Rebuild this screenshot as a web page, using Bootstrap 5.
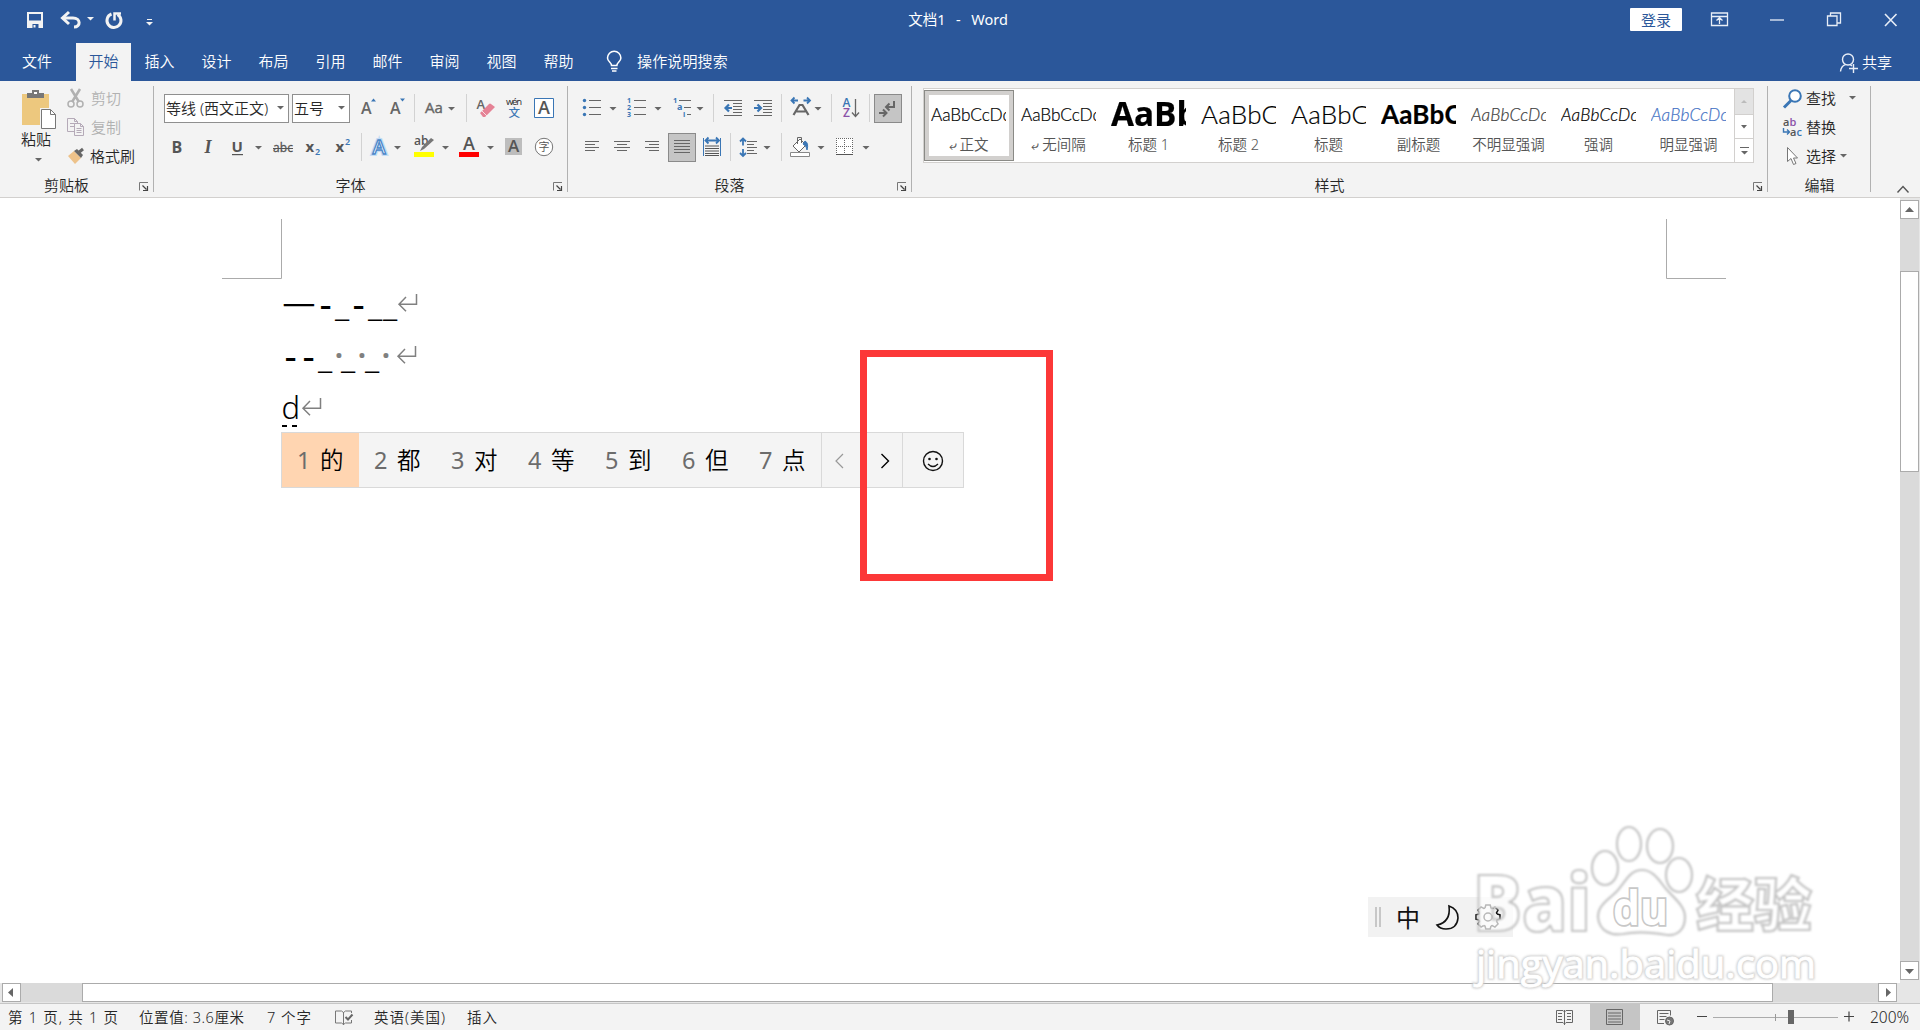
<!DOCTYPE html>
<html lang="zh-CN">
<head>
<meta charset="utf-8">
<title>文档1 - Word</title>
<link href="https://cdn.jsdelivr.net/npm/bootstrap@5.3.0/dist/css/bootstrap.min.css" rel="stylesheet">
<script src="https://cdn.jsdelivr.net/npm/bootstrap@5.3.0/dist/js/bootstrap.bundle.min.js"></script>
<style>
body{width:1920px;height:1030px;overflow:hidden;font:400 15px/20px "Noto Sans","Noto Sans CJK SC",sans-serif;color:#262626;background:#fff}
svg{display:block;flex:none;overflow:visible}
button{border:0;background:none;padding:0;color:inherit;font:inherit}
.blue{background:#2b579a;color:#fff}
.titlebar{height:43px}
.qat{padding-left:26px;width:860px}
.doctitle{width:200px;padding:9px 4px 0 0;font-size:14.5px;word-spacing:1.5px}
.login{width:52px;height:23px;background:#fff;color:#2b579a;line-height:22px;margin:8px 0 0 570px;border-radius:1px}
.tabs,.ribbon,.status{font-weight:350}
.tabs{height:38px}
.tabs .tab{width:57px;text-align:center;line-height:37px}
.tabs .tab.first{width:76px;padding-right:2px}
.tabs .tab.on{width:55px;background:#f3f3f3;color:#2b579a}
.tell{line-height:37px;letter-spacing:.15px}
.share{padding-right:28px;line-height:38px}
.ribbon{height:117px;background:#f3f3f3;border-bottom:1px solid #d2d0ce}
.grp{position:relative;height:116px}
.grp::after{content:"";position:absolute;right:0;top:5px;width:1px;height:106px;background:#b1b1b1}
.g-clip{width:154px}
.g-font{width:414px;padding:12px 0 0 10px}
.g-para{width:344px;padding:12px 0 0 9px}
.g-style{width:856px}
.g-edit{width:103px;padding:2px 0 0 15px}
.grp-name{position:absolute;left:0;right:21px;top:94px;text-align:center}
.g-edit .grp-name{right:0}
.launch{position:absolute;right:5px;top:101px}
.toolrow{height:30px;margin-bottom:9px}
.vsep{width:7px;height:28px;background:linear-gradient(#d2d2d2,#d2d2d2) 3px 0/1px 28px no-repeat;flex:none}
.combo{height:29px;border:1px solid #8f8f8f;background:#fff;padding:0 4px 0 1px;white-space:nowrap}
.c-name{width:125px}
.c-size{width:58px;margin:0 4px 0 3px}
.pressed{background:#c5c5c5;box-shadow:inset 0 0 0 1px #8a8a8a;width:28px;height:29px}
.marks{margin-left:1px}
.bigpaste{width:58px;padding-left:4px}
.bigpaste div{padding-left:17px;line-height:21px}
.cliplist{padding:2px 0 0 9px}
.cliprow{height:29px}
.dim{color:#b1b1b1}
.gallery{margin:7px 0 0 11px;width:831px;height:75px;border:1px solid #d2d0ce;background:#fff}
.sty{width:90px;height:73px;padding:8px 8px 0 7px}
.sty.sel{height:71px;margin-top:1px;border:1px solid #8a8a86;box-shadow:inset 0 0 0 4px #d2d0ce;padding:6px 7px 0 6px}
.pv{width:75px;height:36px;overflow:hidden;white-space:nowrap;color:#000;font:300 17.3px/36px Lato,sans-serif;-webkit-text-stroke:.2px currentColor;letter-spacing:-.1px}
.sn{color:#555;text-align:center;font-size:14.5px;line-height:20px;margin-top:1px;white-space:nowrap}
.h1p{font:700 34px/33px "Open Sans",sans-serif;letter-spacing:0}
.h1p span{display:inline-block;transform:scaleX(.98);transform-origin:0 50%}
.h2p{font-size:26px;line-height:34px;letter-spacing:.2px}
.it{font-size:17.3px;letter-spacing:.2px}
.soft-em{color:#404040}
.strong-em{color:#4472c4}
.gscroll{width:20px;border-left:1px solid #d2d0ce}
.gscroll div{height:24px;border-bottom:1px solid #d2d0ce}
.gscroll .off{background:#e3e3e3;height:26px}
.page{height:785px;width:1900px;position:relative;background:#fff}
.float{position:absolute}
.canvas{left:0;top:0}
.vbar{width:20px;height:785px;background:#e6e6e6;padding:2px 1px 0 0}
.sbtn{background:#fff;border:1px solid #ababab;flex:none;height:19px}
.hbar .sbtn{width:19px}
.track{background:#dadada}
.hbar{height:20px;background:#e6e6e6;padding-left:2px}
.hbar .track{height:19px}
.hbar .thumb{width:1691px}
.status{height:27px;background:#f3f3f3;border-top:1px solid #c6c6c6;font-size:14.5px;line-height:26px;white-space:nowrap}
.picked{background:#c5c5c5}
.ime{left:281px;top:234px;width:683px;height:56px;background:#f4f4f4;border:1px solid #d9d9d9;font-size:23.5px}
.cand{width:77px;padding-left:15px;color:#6c6c6c;line-height:54px}
.cand b{font:350 23.5px/53px "Noto Sans CJK SC",sans-serif;color:#000;margin-left:9px}
.cand i{display:inline-block;width:14px;font-style:normal;font-weight:400}
.cand.pick{background:#ffd5b1}
.focusbox{left:860px;top:152px;width:193px;height:231px;border:7px solid #fc3838}
.langbar{left:1368px;top:699px;width:145px;height:40px;background:#f2f2f2}
.zoomval{font-size:15.5px;width:50px}
.wmark{left:1460px;top:815px}
</style>
</head>
<body>
<svg width="0" height="0" class="position-absolute">
<defs>
<path id="dn" d="M0 0h7l-3.5 3.6z" fill="#666"/>
<g id="la"><path d="M.5 8.500V.5H9" fill="none" stroke="#777"/><path d="M3.500 3.500l4 4M8.500 4v4.500H4" fill="none" stroke="#444" stroke-width="1.200"/></g>
<g id="ret" fill="none" stroke="#808080" stroke-width="1.500"><path d="M18.500 0v10.200H1M8 3L1 10.200l7 7"/></g>
<path id="tooth" d="M-3-9l.8-3h4.400l.8 3L4.240-8.500"/>
</defs>
</svg>

<header class="blue titlebar d-flex">
  <div class="qat d-flex">
    <svg width="130" height="43" fill="none" stroke="#f3f3f3">
      <path d="M2 13h14v14H2z" stroke-width="2"/><path d="M2 21h14v6H2z" fill="#f3f3f3"/><path d="M6.500 28v-4h6v4" fill="#2b579a" stroke="none"/><path d="M7.500 25h2v2.500h-2z" fill="#f3f3f3" stroke="none"/>
      <path d="M38 18h9c8 0 8 9 1 9" stroke-width="3"/><path d="M43 12l-6.500 6 6.500 6" stroke-width="3"/>
      <path d="M61 17h7l-3.500 3.500z" fill="#f3f3f3" stroke="none"/>
      <path d="M85.500 14a7 7 0 1 0 6 .5" stroke-width="3"/><path d="M88.500 20.500v-7H95" stroke-width="2.500"/>
      <path d="M121 19.500h5"/><path d="M120 22h7l-3.500 3.500z" fill="#f3f3f3" stroke="none"/>
    </svg>
  </div>
  <div class="doctitle text-center">文档1&nbsp; - &nbsp;Word</div>
  <div class="d-flex flex-grow-1">
    <button class="login">登录</button>
    <svg width="238" height="43" fill="none" stroke="#e8eef7" stroke-width="1.300">
      <path d="M29.500 13h16v12.500h-16zM29.500 16.500h16M37.500 24v-6M34.500 20.500l3-2.800 3 2.800"/>
      <path d="M88 20h14"/><path d="M145.500 16h9.500v9.500h-9.500zM148.500 16v-3h10v10H155"/><path d="M203 14l11.500 12M214.500 14L203 26" stroke-width="1.600"/>
    </svg>
  </div>
</header>

<nav class="blue tabs d-flex">
  <div class="tab first">文件</div><div class="tab on">开始</div><div class="tab">插入</div><div class="tab">设计</div><div class="tab">布局</div><div class="tab">引用</div><div class="tab">邮件</div><div class="tab">审阅</div><div class="tab">视图</div><div class="tab">帮助</div>
  <svg width="50" height="38" fill="none" stroke="#fff" stroke-width="1.500"><path d="M24.500 22.500c0-3-4-4-4-7.500a6.700 6.700 0 0 1 13.400 0c0 3.500-4 4.500-4 7.500zM24 25.500h6.500M25 28h4.500"/></svg>
  <span class="tell">操作说明搜索</span>
  <div class="ms-auto d-flex share">
    <svg width="22" height="38" fill="none" stroke="#e8eef7" stroke-width="1.400"><circle cx="8" cy="16.500" r="5.500"/><path d="M.5 28.500c.5-4 2.500-6 5-6.800M10 21.500l2 1.500M9 25.500h9M13.500 21v9"/></svg>
    <span>共享</span>
  </div>
</nav>

<section class="ribbon d-flex">
  <div class="grp g-clip d-flex">
    <div class="bigpaste">
      <svg width="54" height="48"><path d="M18 13h27v31H18z" fill="#edc87e"/><path d="M23 17v-5h5V9h7v3h5v5z" fill="#777"/><path d="M30 11h3v2h-3z" fill="#fff"/><path d="M36 27h12l5 5v16H36z" fill="#f3f3f3"/><path d="M37.500 28.500h9l5 5v14h-14z" fill="#fff" stroke="#777"/><path d="M46.500 28.500v5h5" fill="none" stroke="#777"/></svg>
      <div>粘贴</div>
      <svg width="54" height="12"><use href="#dn" x="31" y="8"/></svg>
    </div>
    <div class="cliplist">
      <div class="cliprow d-flex align-items-center dim"><svg width="24" height="20" fill="none" stroke="#b1b1b1" stroke-width="1.500"><path d="M4 1l8 13M13 1L5 14" stroke-width="2.500"/><circle cx="4" cy="16" r="3"/><circle cx="13" cy="16" r="3"/></svg>剪切</div>
      <div class="cliprow d-flex align-items-center dim"><svg width="24" height="20" fill="#f3f3f3" stroke="#b5aab8"><path d="M.5 1.500h7l3 3v10H.5zM7.500 1.500v3h3M3 6.500h5M3 9.500h5"/><path d="M7.500 6.500h6l3 3v9h-9zM13.500 6.500v3h3M9.500 11.500h5M9.500 13.500h5M9.500 15.500h5"/></svg>复制</div>
      <div class="cliprow d-flex align-items-center"><svg width="23" height="20"><path d="M1 10l6-5 7 7-6 6z" fill="#edc28a"/><path d="M7 5l3-2 6 6-2 3z" fill="#666"/><path d="M11 7l5-4" stroke="#666" stroke-width="3"/></svg>格式刷</div>
    </div>
    <div class="grp-name">剪贴板</div><svg class="launch" width="10" height="10"><use href="#la"/></svg>
  </div>

  <div class="grp g-font">
    <div class="toolrow d-flex align-items-center">
      <div class="combo c-name d-flex align-items-center justify-content-between"><span>等线 (西文正文)</span><svg width="7" height="4"><use href="#dn"/></svg></div>
      <div class="combo c-size d-flex align-items-center justify-content-between"><span>五号</span><svg width="7" height="4"><use href="#dn"/></svg></div>
      <svg width="28" height="30" font-family="Open Sans" font-weight="600" font-size="16" fill="#666"><text x="7" y="21">A</text><path d="M17 8.500l2.500-3 2.500 3z" fill="#3a76b5"/></svg>
      <svg width="29" height="30" font-family="Open Sans" font-weight="600" font-size="16" fill="#666"><text x="8" y="21">A</text><path d="M18 5.500h5l-2.500 3z" fill="#3a76b5"/></svg>
      <div class="vsep"></div>
      <svg width="45" height="30"><text x="7" y="20" font-family="Open Sans" font-size="15" font-weight="400" fill="#666" stroke="#666" stroke-width=".4">Aa</text><use href="#dn" x="30" y="14"/></svg>
      <div class="vsep"></div>
      <svg width="31" height="30"><text x="6.500" y="16" font-family="Open Sans" font-weight="600" font-size="13" fill="#666">A</text><path d="M10 20l9-9q1-1 2 0l4 3-10 10h-2z" fill="#e58295"/><path d="M12 18l5 5" stroke="#f8dfe3"/></svg>
      <svg width="28" height="30" font-weight="400"><text x="5" y="12" font-size="9.500" fill="#333" textLength="16">wén</text><text x="7.500" y="24" font-size="11.500" font-weight="500" font-family="Noto Sans CJK SC" fill="#3a76b5">文</text></svg>
      <svg width="32" height="30"><path d="M5.500 5.500h19v19h-19z" fill="#fff" stroke="#3a76b5"/><text x="15" y="21" text-anchor="middle" font-family="Open Sans" font-weight="600" font-size="18" fill="#555">A</text></svg>
    </div>
    <div class="toolrow d-flex align-items-center">
      <svg width="25" height="30" fill="#555"><text x="7.500" y="21" font-family="Open Sans" font-weight="700" font-size="16">B</text></svg>
      <svg width="38" height="30" fill="#555"><text x="15.500" y="21" font-family="Liberation Serif" font-style="italic" font-weight="700" font-size="18">I</text></svg>
      <svg width="41" height="30" fill="#555"><text x="4.500" y="20" font-family="Open Sans" font-weight="700" font-size="15">U</text><path d="M5 22h11v1.200H5z"/><use href="#dn" x="28" y="14"/></svg>
      <svg width="30" height="30" fill="#555"><text x="5" y="20" font-family="Open Sans" font-weight="400" font-size="12" textLength="20" stroke="#555" stroke-width=".3">abc</text><path d="M5 16h20v1H5z"/></svg>
      <svg width="30" height="30" fill="#555"><text x="7.500" y="20" font-family="Open Sans" font-weight="700" font-size="15">x</text><text x="17" y="23" font-size="9" font-weight="600" fill="#3a76b5">2</text></svg>
      <svg width="30" height="30" fill="#555"><text x="7.500" y="20" font-family="Open Sans" font-weight="700" font-size="15">x</text><text x="17" y="13" font-size="9" font-weight="600" fill="#3a76b5">2</text></svg>
      <div class="vsep"></div>
      <svg width="43" height="30" font-family="Open Sans" font-size="20"><text x="7.500" y="22" fill="#fff" font-weight="600" stroke="#c4dcf4" stroke-width="4" paint-order="stroke">A</text><text x="7.500" y="22" font-weight="600" fill="#fff" stroke="#4a86c8" stroke-width="1.300">A</text><use href="#dn" x="29" y="14"/></svg>
      <svg width="45" height="30"><text x="6" y="13" font-family="Open Sans" font-weight="600" font-size="12" fill="#555">ab</text><path d="M12 19l2-4 9-9 3 2-10 9z" fill="#777"/><path d="M6 20h20v5H6z" fill="#ff0"/><use href="#dn" x="34" y="14"/></svg>
      <svg width="45" height="30"><text x="16" y="18" text-anchor="middle" font-family="Open Sans" font-weight="600" font-size="18" fill="#555">A</text><path d="M6 20h20v5H6z" fill="red"/><use href="#dn" x="34" y="14"/></svg>
      <svg width="31" height="30"><path d="M7 6h17v17H7z" fill="#bdbdbd"/><text x="15.500" y="20" text-anchor="middle" font-family="Open Sans" font-weight="600" font-size="17" fill="#555">A</text></svg>
      <svg width="31" height="30"><circle cx="15" cy="15" r="8.700" fill="#fff" stroke="#777"/><text x="15" y="19" text-anchor="middle" font-size="11" fill="#555" font-family="Noto Sans CJK SC">字</text></svg>
    </div>
    <div class="grp-name">字体</div><svg class="launch" width="10" height="10"><use href="#la"/></svg>
  </div>

  <div class="grp g-para">
    <div class="toolrow d-flex align-items-center">
      <svg width="45" height="30" stroke="#666"><path d="M12 7.500h12M12 14.500h12M12 21.500h12"/><g fill="#3a76b5" stroke="none"><circle cx="7.500" cy="7.500" r="1.700"/><circle cx="7.500" cy="14.500" r="1.700"/><circle cx="7.500" cy="21.500" r="1.700"/></g><use href="#dn" x="32.500" y="14" stroke="none"/></svg>
      <svg width="45" height="30"><path d="M12 7.500h12M12 14.500h12M12 21.500h12" stroke="#666"/><g fill="#3a76b5" font-size="7" font-weight="700"><text x="5" y="10">1</text><text x="5" y="17">2</text><text x="5" y="24">3</text></g><use href="#dn" x="32.500" y="14"/></svg>
      <svg width="43" height="30"><path d="M12 7.500h12M17 14.500h7M20 21.500h4" stroke="#666"/><g fill="#3a76b5" font-size="7.500" font-weight="700"><text x="6" y="10">1</text><text x="10" y="17" font-size="9">a</text><text x="16" y="24">i</text></g><use href="#dn" x="29.500" y="14"/></svg>
      <div class="vsep"></div>
      <svg width="31" height="30"><path d="M7 7.500h18M16 10.500h9M16 13.500h9M16 16.500h9M16 19.500h9M7 22.500h18" stroke="#666"/><path d="M15 15H8M12 11.500L8.500 15l3.500 3.500" stroke="#3a76b5" stroke-width="2.200" fill="none"/></svg>
      <svg width="30" height="30"><path d="M6 7.500h18M15 10.500h9M15 13.500h9M15 16.500h9M15 19.500h9M6 22.500h18" stroke="#666"/><path d="M6 15h7M9.500 11.500L13 15l-3.500 3.500" stroke="#3a76b5" stroke-width="2.200" fill="none"/></svg>
      <div class="vsep"></div>
      <svg width="43" height="30"><path d="M8.500 22l6-10h3l6 10M11.500 18.500h9" stroke="#666" stroke-width="2.200" fill="none"/><path d="M6.500 7.500H13M9.500 4.500l-3 3 3 3M25 7.500h-6.500M22 4.500l3 3-3 3" stroke="#3a76b5" stroke-width="1.800" fill="none"/><use href="#dn" x="29.500" y="14"/></svg>
      <div class="vsep"></div>
      <svg width="31" height="30" font-family="Open Sans" font-weight="600" font-size="12"><text x="7.500" y="14" fill="#3a76b5">A</text><text x="8" y="24" fill="#8a52a8">Z</text><path d="M20.500 6v17M17 19.500l3.500 4 3.500-4" fill="none" stroke="#666" stroke-width="1.300"/></svg>
      <div class="vsep"></div>
      <button class="pressed marks"><svg width="28" height="29" fill="none" stroke="#666" stroke-width="2"><path d="M20 7v6h-7M15.500 9.500L12 13l3.500 3.500M5 19h7M9 15.500l3.500 3.500L9 22.500"/></svg></button>
    </div>
    <div class="toolrow d-flex align-items-center">
      <svg width="30" height="30" stroke="#666"><path d="M8 9.500h14M8 12.500h10M8 15.500h14M8 18.500h10"/></svg>
      <svg width="30" height="30" stroke="#666"><path d="M7 9.500h16M10 12.500h10M7 15.500h16M10 18.500h10"/></svg>
      <svg width="31" height="30" stroke="#666"><path d="M8 9.500h14M12 12.500h10M8 15.500h14M12 18.500h10"/></svg>
      <button class="pressed"><svg width="28" height="29" stroke="#666"><path d="M6 7.500h16M6 10.500h16M6 13.500h16M6 16.500h16M6 19.500h16"/></svg></button>
      <svg width="31" height="30"><path d="M7.500 6v18M24.500 6v18" stroke="#3a76b5"/><path d="M10 8.500h13M12.500 5.500l-3 3 3 3M20 5.500l3 3-3 3" stroke="#3a76b5" stroke-width="1.800" fill="none"/><path d="M9 14h14M9 16.500h14M9 19h14M9 21.500h14M9 23.500h14" stroke="#555"/></svg>
      <div class="vsep"></div>
      <svg width="44" height="30"><path d="M13 9.500h10M13 12.500h7M13 15.500h10M13 18.500h7M13 21.500h10" stroke="#666"/><path d="M9 6.500v7M9 17v7M6 9.500l3-3 3 3M6 21l3 3 3-3" fill="none" stroke="#3a76b5" stroke-width="1.800"/><use href="#dn" x="29.500" y="14"/></svg>
      <div class="vsep"></div>
      <svg width="45" height="30"><path d="M8 14l7-7 6 6-7 7z" fill="#fff" stroke="#666"/><path d="M12.500 12V5.500h4V11" fill="none" stroke="#666"/><path d="M20 9q4 2 2 9 0-4-4-6z" fill="#3a76b5" stroke="#3a76b5"/><path d="M5.500 20.500h19v4h-19z" fill="#fff" stroke="#888"/><use href="#dn" x="32.500" y="14"/></svg>
      <svg width="45" height="30"><path d="M6 6h17v17H6z" fill="#fff"/><path d="M6.500 6v17M14.500 6v17M22.500 6v17M6 6.500h17M6 14.500h17" stroke="#666" stroke-dasharray="1 1"/><path d="M6 22.500h17" stroke="#555"/><use href="#dn" x="32.500" y="14"/></svg>
    </div>
    <div class="grp-name">段落</div><svg class="launch" width="10" height="10"><use href="#la"/></svg>
  </div>

  <div class="grp g-style">
    <div class="gallery d-flex">
      <div class="sty sel"><div class="pv">AaBbCcDc</div><div class="sn"><small>⤶</small> 正文</div></div>
      <div class="sty"><div class="pv">AaBbCcDc</div><div class="sn"><small>⤶</small> 无间隔</div></div>
      <div class="sty"><div class="pv h1p"><span>AaBb</span></div><div class="sn">标题 1</div></div>
      <div class="sty"><div class="pv h2p">AaBbC</div><div class="sn">标题 2</div></div>
      <div class="sty"><div class="pv h2p">AaBbC</div><div class="sn">标题</div></div>
      <div class="sty"><div class="pv h2p fw-bold">AaBbC</div><div class="sn">副标题</div></div>
      <div class="sty"><div class="pv it fst-italic soft-em">AaBbCcDc</div><div class="sn">不明显强调</div></div>
      <div class="sty"><div class="pv it fst-italic">AaBbCcDc</div><div class="sn">强调</div></div>
      <div class="sty"><div class="pv it fst-italic strong-em">AaBbCcDc</div><div class="sn">明显强调</div></div>
      <div class="gscroll ms-auto">
        <div class="off"><svg width="18" height="24"><path d="M6 14h6l-3-3z" fill="#bbb"/></svg></div>
        <div><svg width="18" height="23"><path d="M6 10h6l-3 3.500z" fill="#666"/></svg></div>
        <div class="border-0"><svg width="18" height="23"><path d="M5 8h9v1H5zM6 12h7l-3.500 3.500z" fill="#666"/></svg></div>
      </div>
    </div>
    <div class="grp-name">样式</div><svg class="launch" width="10" height="10"><use href="#la"/></svg>
  </div>

  <div class="grp g-edit">
    <div class="cliprow d-flex align-items-center"><svg width="23" height="20"><circle cx="12" cy="8" r="5.800" fill="#fff" stroke="#3a76b5" stroke-width="2"/><path d="M8 12.500l-7 7" stroke="#3a76b5" stroke-width="3"/></svg>查找<svg width="20" height="4"><use href="#dn" x="13"/></svg></div>
    <div class="cliprow d-flex align-items-center"><svg width="23" height="20" font-family="Open Sans" font-size="11" font-weight="600" fill="#555"><text x="0" y="9">a<tspan fill="#8a52a8">b</tspan></text><text x="7" y="19">a<tspan fill="#3a76b5">c</tspan></text><path d="M.5 11v4H6M4 12.500L6.500 15 4 17.500" fill="none" stroke="#3a76b5" stroke-width="1.400"/></svg>替换</div>
    <div class="cliprow d-flex align-items-center"><svg width="23" height="20"><path d="M4.500 1.500v14l3.500-3 2.500 6 2.500-1-2.500-5.500h4z" fill="#fff" stroke="#777"/></svg>选择<svg width="12" height="4"><use href="#dn" x="4"/></svg></div>
    <div class="grp-name">编辑</div>
  </div>
  <div class="ms-auto d-flex align-items-end"><svg width="24" height="13"><path d="M1.500 8.500l5.500-6 5.500 6" fill="none" stroke="#555" stroke-width="1.400"/></svg></div>
</section>

<main class="d-flex">
  <div class="page">
    <svg class="float canvas" width="1900" height="300">
      <path d="M222 80.500h59.500V21M1726 80.500h-59.500V21" fill="none" stroke="#ababab"/>
      <g font-family="Noto Sans" fill="#000">
        <text y="118" x="282" font-family="Noto Sans CJK SC" font-size="38" font-weight="350">—</text>
        <text y="120" x="319.500 352.500" font-size="38">--</text>
        <text y="117.500" x="335 368 383" font-size="34" font-weight="300">___</text>
        <text y="172" x="284.500 302.500" font-size="38">--</text>
        <text y="169.500" x="318 341 365" font-size="34" font-weight="300">___</text>
        <text y="169" x="334.500 357.500 381.500" fill="#808080" font-size="32" font-weight="600">···</text>
        <text x="281.500" y="221" font-size="31" font-weight="350">d</text>
      </g>
      <use href="#ret" x="398" y="96"/><use href="#ret" x="397" y="148"/><use href="#ret" x="302" y="200"/>
      <path d="M282 228h5M292 228h5" stroke="#000" stroke-width="2"/>
    </svg>
    <div class="ime float d-flex">
      <div class="cand pick"><i>1</i><b>的</b></div><div class="cand"><i>2</i><b>都</b></div><div class="cand"><i>3</i><b>对</b></div><div class="cand"><i>4</i><b>等</b></div><div class="cand"><i>5</i><b>到</b></div><div class="cand"><i>6</i><b>但</b></div><div class="cand"><i>7</i><b>点</b></div>
      <svg width="142" height="54" fill="none"><path d="M.5 0v54M81.500 0v54" stroke="#d9d9d9"/><path d="M22 21l-7 7 7 7" stroke="#999" stroke-width="1.200"/><path d="M60.500 21l7 7-7 7" stroke="#000" stroke-width="1.400"/><circle cx="112" cy="28" r="9.500" stroke="#111" stroke-width="1.400"/><path d="M107 31q5 5 10 0" stroke="#111" stroke-width="1.300"/><circle cx="108.500" cy="26" r="1.300" fill="#111"/><circle cx="115.500" cy="26" r="1.300" fill="#111"/></svg>
    </div>
    <div class="focusbox float"></div>
    <div class="langbar float">
      <svg width="145" height="40" fill="none" stroke="#111" stroke-width="1.600"><path d="M8 10v20M12 10v20" stroke="#b0b0b0" stroke-width="1.300"/><text x="28" y="29.500" font-size="24" fill="#111" stroke="none" font-family="Noto Sans CJK SC">中</text><path d="M81 9q9 3 9 12-1 11-12 11-6 0-9-4 14-3 12-19z"/>
      <g transform="translate(120 20)" stroke-width="1.500"><use href="#tooth"/><use href="#tooth" transform="rotate(45)"/><use href="#tooth" transform="rotate(90)"/><use href="#tooth" transform="rotate(135)"/><use href="#tooth" transform="rotate(180)"/><use href="#tooth" transform="rotate(225)"/><use href="#tooth" transform="rotate(270)"/><use href="#tooth" transform="rotate(315)"/><circle r="4"/></g></svg>
    </div>
  </div>
  <div class="vbar">
    <div class="sbtn"><svg width="17" height="17"><path d="M4 11h9l-4.500-5z" fill="#666"/></svg></div>
    <div class="track" style="height:52px"></div><div class="sbtn" style="height:201px"></div><div class="track" style="height:489px"></div>
    <div class="sbtn"><svg width="17" height="17"><path d="M4 7h9l-4.500 5z" fill="#666"/></svg></div>
  </div>
</main>

<div class="hbar d-flex">
  <div class="sbtn"><svg width="17" height="17"><path d="M10 4v9L5 8.500z" fill="#666"/></svg></div>
  <div class="track" style="width:61px"></div><div class="sbtn thumb"></div><div class="track" style="width:105px"></div>
  <div class="sbtn"><svg width="17" height="17"><path d="M7 4v9l5-4.500z" fill="#666"/></svg></div>
</div>

<footer class="status d-flex">
  <svg width="560" height="26" fill="#262626" font-size="14.500"><text x="8" y="18.500" textLength="110">第 1 页, 共 1 页</text><text x="139" y="18.500" textLength="105">位置值: 3.6厘米</text><text x="267" y="18.500" textLength="44">7 个字</text><path d="M343.500 8v13M343.500 8.500l-2-1.500h-6v12h6l2 1.500M343.500 8.500l2-1.500h6v2M343.500 20.500l2-1.500h6v-3" fill="none" stroke="#777"/><path d="M345.500 13l2.500 2.500 4.500-5" fill="none" stroke="#666" stroke-width="2"/><text x="374" y="18.500" textLength="71">英语(美国)</text><text x="467" y="18.500" textLength="30">插入</text></svg>
  <div class="ms-auto d-flex">
    <svg width="48" height="26" fill="none" stroke="#666"><path d="M22.500 6v15M14.500 6.500h6.500l1.500 1.500 1.500-1.500h6.500v12H24l-1.500 1.500-1.500-1.500h-6.500zM16 9.500h4M16 12.500h4M16 15.500h4M25 9.500h4M25 12.500h4M25 15.500h4"/></svg>
    <svg class="picked" width="50" height="27" fill="none" stroke="#666"><path d="M16.500 5.500h16v15h-16zM18 9h13M18 12h13M18 15h13M18 18h13"/></svg>
    <svg width="230" height="26" fill="none" stroke="#666"><path d="M24 19.500h-6.500V6.500h13v5M19.500 9.500h9M19.500 12.500h7M19.500 15.500h5"/><circle cx="29.500" cy="17" r="4" fill="#777"/><path d="M27 16l3 1-1 3" stroke="#eee"/><path d="M57 12.500h10M204 12.500h10M209 7.500v10" stroke="#444" stroke-width="1.200"/><path d="M73 13.500h125" stroke="#ababab"/><path d="M135.500 10v7" stroke="#999"/><path d="M148 6h6v14h-6z" fill="#666" stroke="none"/></svg>
    <span class="zoomval">200%</span>
  </div>
</footer>

<svg class="float wmark" width="370" height="190" font-family="Open Sans" font-weight="700">
  <defs><filter id="soft" x="-5%" y="-5%" width="110%" height="110%"><feGaussianBlur stdDeviation=".8"/></filter>
  <g id="logo">
    <text x="13" y="116" font-size="78" textLength="118" lengthAdjust="spacingAndGlyphs" font-weight="800">Bai</text>
    <ellipse cx="145" cy="53" rx="13" ry="17"/><ellipse cx="169" cy="29" rx="12" ry="17"/><ellipse cx="200" cy="31" rx="13" ry="17"/><ellipse cx="219" cy="60" rx="13" ry="17"/>
    <path d="M182 55c12 0 18 12 25 20s18 16 18 27c0 13-8 19-18 18-16-3-30-4-44-1-12 2-24-3-25-17 0-13 12-18 20-27s12-20 24-20z"/>
    <text x="236" y="111" font-size="58" font-family="Noto Sans CJK SC" font-weight="900">经验</text>
  </g>
  <text id="url" x="16" y="163" font-size="38" font-weight="400" textLength="340" lengthAdjust="spacingAndGlyphs">jingyan.baidu.com</text>
  </defs>
  <use href="#logo" fill="#fff" opacity=".7"/>
  <use href="#logo" fill="none" stroke="#c4c4c4" stroke-width="2.200" filter="url(#soft)"/>
  <use href="#url" fill="#ccc" stroke="#ccc" stroke-width="3" filter="url(#soft)"/>
  <use href="#url" fill="#fff" stroke="#fff" stroke-width=".8"/>
  <text x="153" y="110" font-size="46" fill="#fff" stroke="#c8c8c8" stroke-width="3.500" paint-order="stroke" textLength="55" lengthAdjust="spacingAndGlyphs">du</text>
</svg>
</body>
</html>
